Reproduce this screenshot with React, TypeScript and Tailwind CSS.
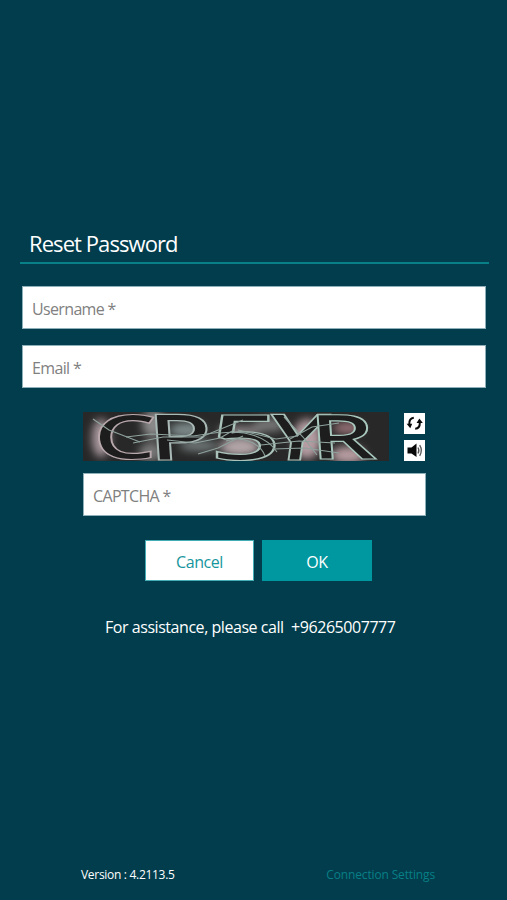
import type React from "react";

const FIELD_CLASS =
	"block h-[43px] w-full border border-[#8fb0b8] bg-white px-[9px] pt-0.5 text-[16px] tracking-[-0.65px] text-[#555] placeholder:text-[#808080] outline-none";

type Glyph = { char: string; stroke: string; transform: string };

const GLYPHS: Glyph[] = [
	{ char: "C", stroke: "#b9a9ad", transform: "translate(10 47) scale(1.62 1)" },
	{ char: "P", stroke: "#a9b9b5", transform: "translate(66 48) skewX(4) scale(1.7 1.03)" },
	{ char: "5", stroke: "#a9c2ba", transform: "translate(127 48) scale(2 1.03)" },
	{ char: "Y", stroke: "#a9c2ba", transform: "translate(182 48) skewX(-8) scale(1.6 1.03)" },
	{ char: "R", stroke: "#a9c8be", transform: "translate(228 47) skewX(4) scale(1.66 1)" },
];

const SCRATCHES: string[] = [
	"M10 7 26 18 57 30",
	"M43 25 68 22 110 24 138 20",
	"M50 31 80 25 118 25 160 8",
	"M84 28 112 31 137 26 151 18",
	"M115 42 135 36 151 28 160 24",
	"M137 21C164 18 184 25 194 40",
	"M143 29C160 23 178 32 182 44",
	"M155 18 193 27 215 24",
	"M178 33 216 29 252 31",
	"M201 5 220 25 234 43",
	"M190 37 222 36 256 41",
	"M207 27 229 15 256 11",
];

function Captcha(): React.ReactElement {
	return (
		<svg
			width="306"
			height="49"
			viewBox="0 0 306 49"
			className="block shrink-0 overflow-visible"
			role="img"
			aria-label="CAPTCHA"
		>
			<defs>
				<filter id="glow" x="-50%" y="-50%" width="200%" height="200%">
					<feGaussianBlur stdDeviation="4" />
				</filter>
				<clipPath id="frame">
					<rect width="306" height="49" />
				</clipPath>
			</defs>
			<g clipPath="url(#frame)">
				<rect width="306" height="49" fill="#282828" />
				<g filter="url(#glow)">
					<ellipse cx="18" cy="26" rx="9" ry="19" fill="#a8989d" />
					<ellipse cx="70" cy="12" rx="11" ry="14" fill="#898989" />
					<ellipse cx="68" cy="40" rx="12" ry="10" fill="#777" />
					<ellipse cx="104" cy="18" rx="18" ry="8" fill="#7c8888" />
					<ellipse cx="116" cy="34" rx="20" ry="5" fill="#788080" />
					<ellipse cx="157" cy="19" rx="23" ry="5" fill="#8d8588" />
					<ellipse cx="157" cy="35" rx="20" ry="9" fill="#b5a7aa" />
					<ellipse cx="186" cy="13" rx="16" ry="7" fill="#777" />
					<ellipse cx="224" cy="27" rx="14" ry="20" fill="#b49ca2" />
					<ellipse cx="265" cy="16" rx="15" ry="6" fill="#997378" />
					<ellipse cx="265" cy="43" rx="17" ry="9" fill="#b59ba0" />
				</g>
			</g>
			<g
				fill="#1d1d1d"
				strokeWidth="1.2"
				fontFamily="'Open Sans', sans-serif"
				fontSize="62"
				fontWeight="600"
			>
				{GLYPHS.map((glyph) => (
					<text key={glyph.char} stroke={glyph.stroke} transform={glyph.transform}>
						{glyph.char}
					</text>
				))}
			</g>
			<g fill="none" stroke="#8fa29d" strokeWidth="1.1">
				{SCRATCHES.map((d) => (
					<path key={d} d={d} />
				))}
			</g>
		</svg>
	);
}

function RefreshIcon(): React.ReactElement {
	return (
		<svg width="21" height="21" viewBox="0 0 21 21" aria-hidden>
			<g fill="none" stroke="#080808" strokeWidth="2">
				<path d="M9.8 4.8C6.5 5.2 5.1 7.7 5.3 11.2" />
				<path d="M11.2 15.8C14.6 15.6 15.9 13 15.8 9.8" />
			</g>
			<path d="M2.6 10.8H8.2L6.3 15.2Z" fill="#080808" />
			<path d="M12.6 10 15.4 5.5 18.8 10Z" fill="#080808" />
		</svg>
	);
}

function SpeakerIcon(): React.ReactElement {
	return (
		<svg width="21" height="21" viewBox="0 0 21 21" aria-hidden>
			<path d="M3.5 7.5H7.5L12.5 3.5V17L7.5 13.5H3.5Z" fill="#080808" />
			<g fill="none" stroke="#555" strokeWidth="1.3">
				<path d="M14 7.5Q15.8 10.5 14 13.5" />
				<path d="M15.7 5.2Q19 10.5 15.7 15.8" />
			</g>
		</svg>
	);
}

export default function App(): React.ReactElement {
	return (
		<main className="flex h-[900px] w-[507px] flex-col bg-[#013d4c] font-['Open_Sans','Noto_Sans',sans-serif] text-white">
			<header className="mt-[227px] ml-5 h-[37px] w-[469px] border-b-2 border-[#078087] pl-[9px]">
				<h1 className="text-[22px] leading-8 tracking-[-0.92px]">
					Reset Password
				</h1>
			</header>

			<form className="mt-[22px] flex flex-col pl-[22px]">
				<div className="flex w-[464px] flex-col gap-4">
					<input className={FIELD_CLASS} placeholder="Username *" />
					<input className={FIELD_CLASS} placeholder="Email *" />
				</div>

				<div className="mt-6 ml-[61px] w-[343px]">
					<div className="flex h-[49px] gap-[15px]">
						<Captcha />
						<div className="flex flex-col gap-[6px] pt-px">
							<button type="button" aria-label="Refresh" className="size-[21px] bg-white">
								<RefreshIcon />
							</button>
							<button type="button" aria-label="Listen" className="size-[21px] bg-white">
								<SpeakerIcon />
							</button>
						</div>
					</div>
					<div className="mt-3">
						<input className={FIELD_CLASS} placeholder="CAPTCHA *" />
					</div>
				</div>

				<div className="mt-6 ml-[123px] flex gap-2 text-[16px] tracking-[-0.45px]">
					<button type="button" className="h-[41px] w-[109px] border border-[#42adb4] bg-white pt-0.5 text-[#16969e]">
						Cancel
					</button>
					<button type="button" className="h-[41px] w-[110px] bg-[#0098a0] pt-0.5 text-white">
						OK
					</button>
				</div>
			</form>

			<p className="mt-[34px] pl-[105px] text-[16px] leading-6 tracking-[-0.45px] whitespace-pre">
				{"For assistance, please call  +96265007777"}
			</p>

			<footer className="mt-auto mb-[15px] flex h-5 justify-between pr-[72px] pl-[81px] text-[12px] leading-5 tracking-[-0.15px]">
				<span className="tracking-[-0.3px]">Version : 4.2113.5</span>
				<a className="text-[#087f87]">Connection Settings</a>
			</footer>
		</main>
	);
}
